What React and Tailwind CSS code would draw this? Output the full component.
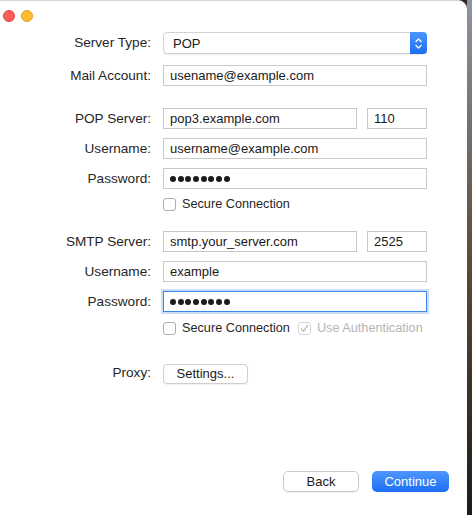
import { useState } from "react";

const font = { fontFamily: "'Liberation Sans', Arial, sans-serif" };

function Label({ children }) {
  return <div className="text-right text-[13.6px] text-[#262626] leading-none pr-[1px]">{children}</div>;
}

function Dots() {
  return (
    <div className="flex gap-[1.7px]">
      {[0, 1, 2, 3, 4, 5, 6, 7].map((i) => (
        <span key={i} className="w-[6px] h-[6px] rounded-full bg-[#1a1a1a]" />
      ))}
    </div>
  );
}

function Field({ value, className = "", focused = false, dots = false }) {
  return (
    <div
      className={`h-[21px] flex items-center pl-[6px] bg-white text-[13px] text-[#1a1a1a] leading-none ${
        focused ? "border border-[#3b86ea] ring-2 ring-[#a7c8f3]/60" : "border border-[#c9c9c9]"
      } ${className}`}
    >
      {dots ? <Dots /> : value}
    </div>
  );
}

function Check({ label, checked = false, disabled = false }) {
  return (
    <div className={`flex items-center gap-[6px] text-[12.7px] leading-none ${disabled ? "text-[#b4b4b4]" : "text-[#262626]"}`}>
      <div className={`w-[13px] h-[13px] rounded-[3px] border bg-white flex items-center justify-center ${disabled ? "border-[#d6d6d6]" : "border-[#aeaeae]"}`}>
        {checked && (
          <svg width="9" height="9" viewBox="0 0 10 10" fill="none">
            <path d="M1.5 5.5 L4 8 L8.5 1.5" stroke="#b8b8b8" strokeWidth="1.4" strokeLinecap="round" strokeLinejoin="round" />
          </svg>
        )}
      </div>
      <span>{label}</span>
    </div>
  );
}

function Row({ label, children, className = "" }) {
  return (
    <div className={`flex items-center ${className}`}>
      <div className="w-[152px]"><Label>{label}</Label></div>
      <div className="ml-[11px] w-[264px]">{children}</div>
    </div>
  );
}

export default function App() {
  const [serverType] = useState("POP");

  return (
    <div className="w-[472px] h-[515px] flex bg-[#2b2622]" style={font}>
      <div className="w-[467px] h-full bg-white rounded-tr-[9px] border-t border-[#d8d8d8] flex flex-col">
        <div className="flex gap-[6px] pl-[3px] pt-[9px]">
          <div className="w-[12px] h-[12px] rounded-full bg-[#fe5f57] border border-[#e14640]" />
          <div className="w-[12px] h-[12px] rounded-full bg-[#febc2e] border border-[#dea123]" />
        </div>

        <Row label="Server Type:" className="mt-[10px]">
          <div className="h-[22px] flex items-center rounded-[4px] border border-[#d2d2d2] shadow-[0_1px_1px_rgba(0,0,0,0.08)] bg-white">
            <span className="flex-1 pl-[9px] text-[13px] text-[#1a1a1a] leading-none">{serverType}</span>
            <div className="w-[17px] h-[22px] -mr-[1px] rounded-r-[4px] bg-gradient-to-b from-[#4a95fb] to-[#1c6ef3] flex items-center justify-center">
              <svg width="9" height="13" viewBox="0 0 9 13" fill="none">
                <path d="M2 4.5 L4.5 2 L7 4.5" stroke="white" strokeWidth="1.3" strokeLinecap="round" strokeLinejoin="round" />
                <path d="M2 8.5 L4.5 11 L7 8.5" stroke="white" strokeWidth="1.3" strokeLinecap="round" strokeLinejoin="round" />
              </svg>
            </div>
          </div>
        </Row>

        <Row label="Mail Account:" className="mt-[11px]">
          <Field value="usename@example.com" />
        </Row>

        <Row label="POP Server:" className="mt-[22px]">
          <div className="flex gap-[10px]">
            <Field value="pop3.example.com" className="w-[194px]" />
            <Field value="110" className="w-[60px]" />
          </div>
        </Row>
        <Row label="Username:" className="mt-[9px]">
          <Field value="username@example.com" />
        </Row>
        <Row label="Password:" className="mt-[9px]">
          <Field dots />
        </Row>
        <div className="ml-[163px] mt-[9px]">
          <Check label="Secure Connection" />
        </div>

        <Row label="SMTP Server:" className="mt-[20px]">
          <div className="flex gap-[10px]">
            <Field value="smtp.your_server.com" className="w-[194px]" />
            <Field value="2525" className="w-[60px]" />
          </div>
        </Row>
        <Row label="Username:" className="mt-[9px]">
          <Field value="example" />
        </Row>
        <Row label="Password:" className="mt-[9px]">
          <Field dots focused />
        </Row>
        <div className="ml-[163px] mt-[10px] flex gap-[8px]">
          <Check label="Secure Connection" />
          <Check label="Use Authentication" checked disabled />
        </div>

        <Row label="Proxy:" className="mt-[26px]">
          <button className="w-[85px] h-[20px] rounded-[4px] border border-[#cfcfcf] bg-white shadow-[0_1px_1px_rgba(0,0,0,0.06)] text-[13px] text-[#1a1a1a] leading-none">
            Settings...
          </button>
        </Row>

        <div className="mt-auto mb-[23px] flex justify-end gap-[13px] pr-[18px]">
          <button className="w-[76px] h-[21px] rounded-[5px] border border-[#cbcbcb] bg-white shadow-[0_1px_1px_rgba(0,0,0,0.06)] text-[13px] text-[#1a1a1a] leading-none">
            Back
          </button>
          <button className="w-[77px] h-[21px] rounded-[5px] bg-gradient-to-b from-[#4d97fb] to-[#1a6ef5] text-[13px] text-white leading-none">
            Continue
          </button>
        </div>
      </div>
      <div className="flex-1 bg-gradient-to-b from-[#8c95a2] via-[#5e4b39] to-[#1f1b18]" />
    </div>
  );
}
